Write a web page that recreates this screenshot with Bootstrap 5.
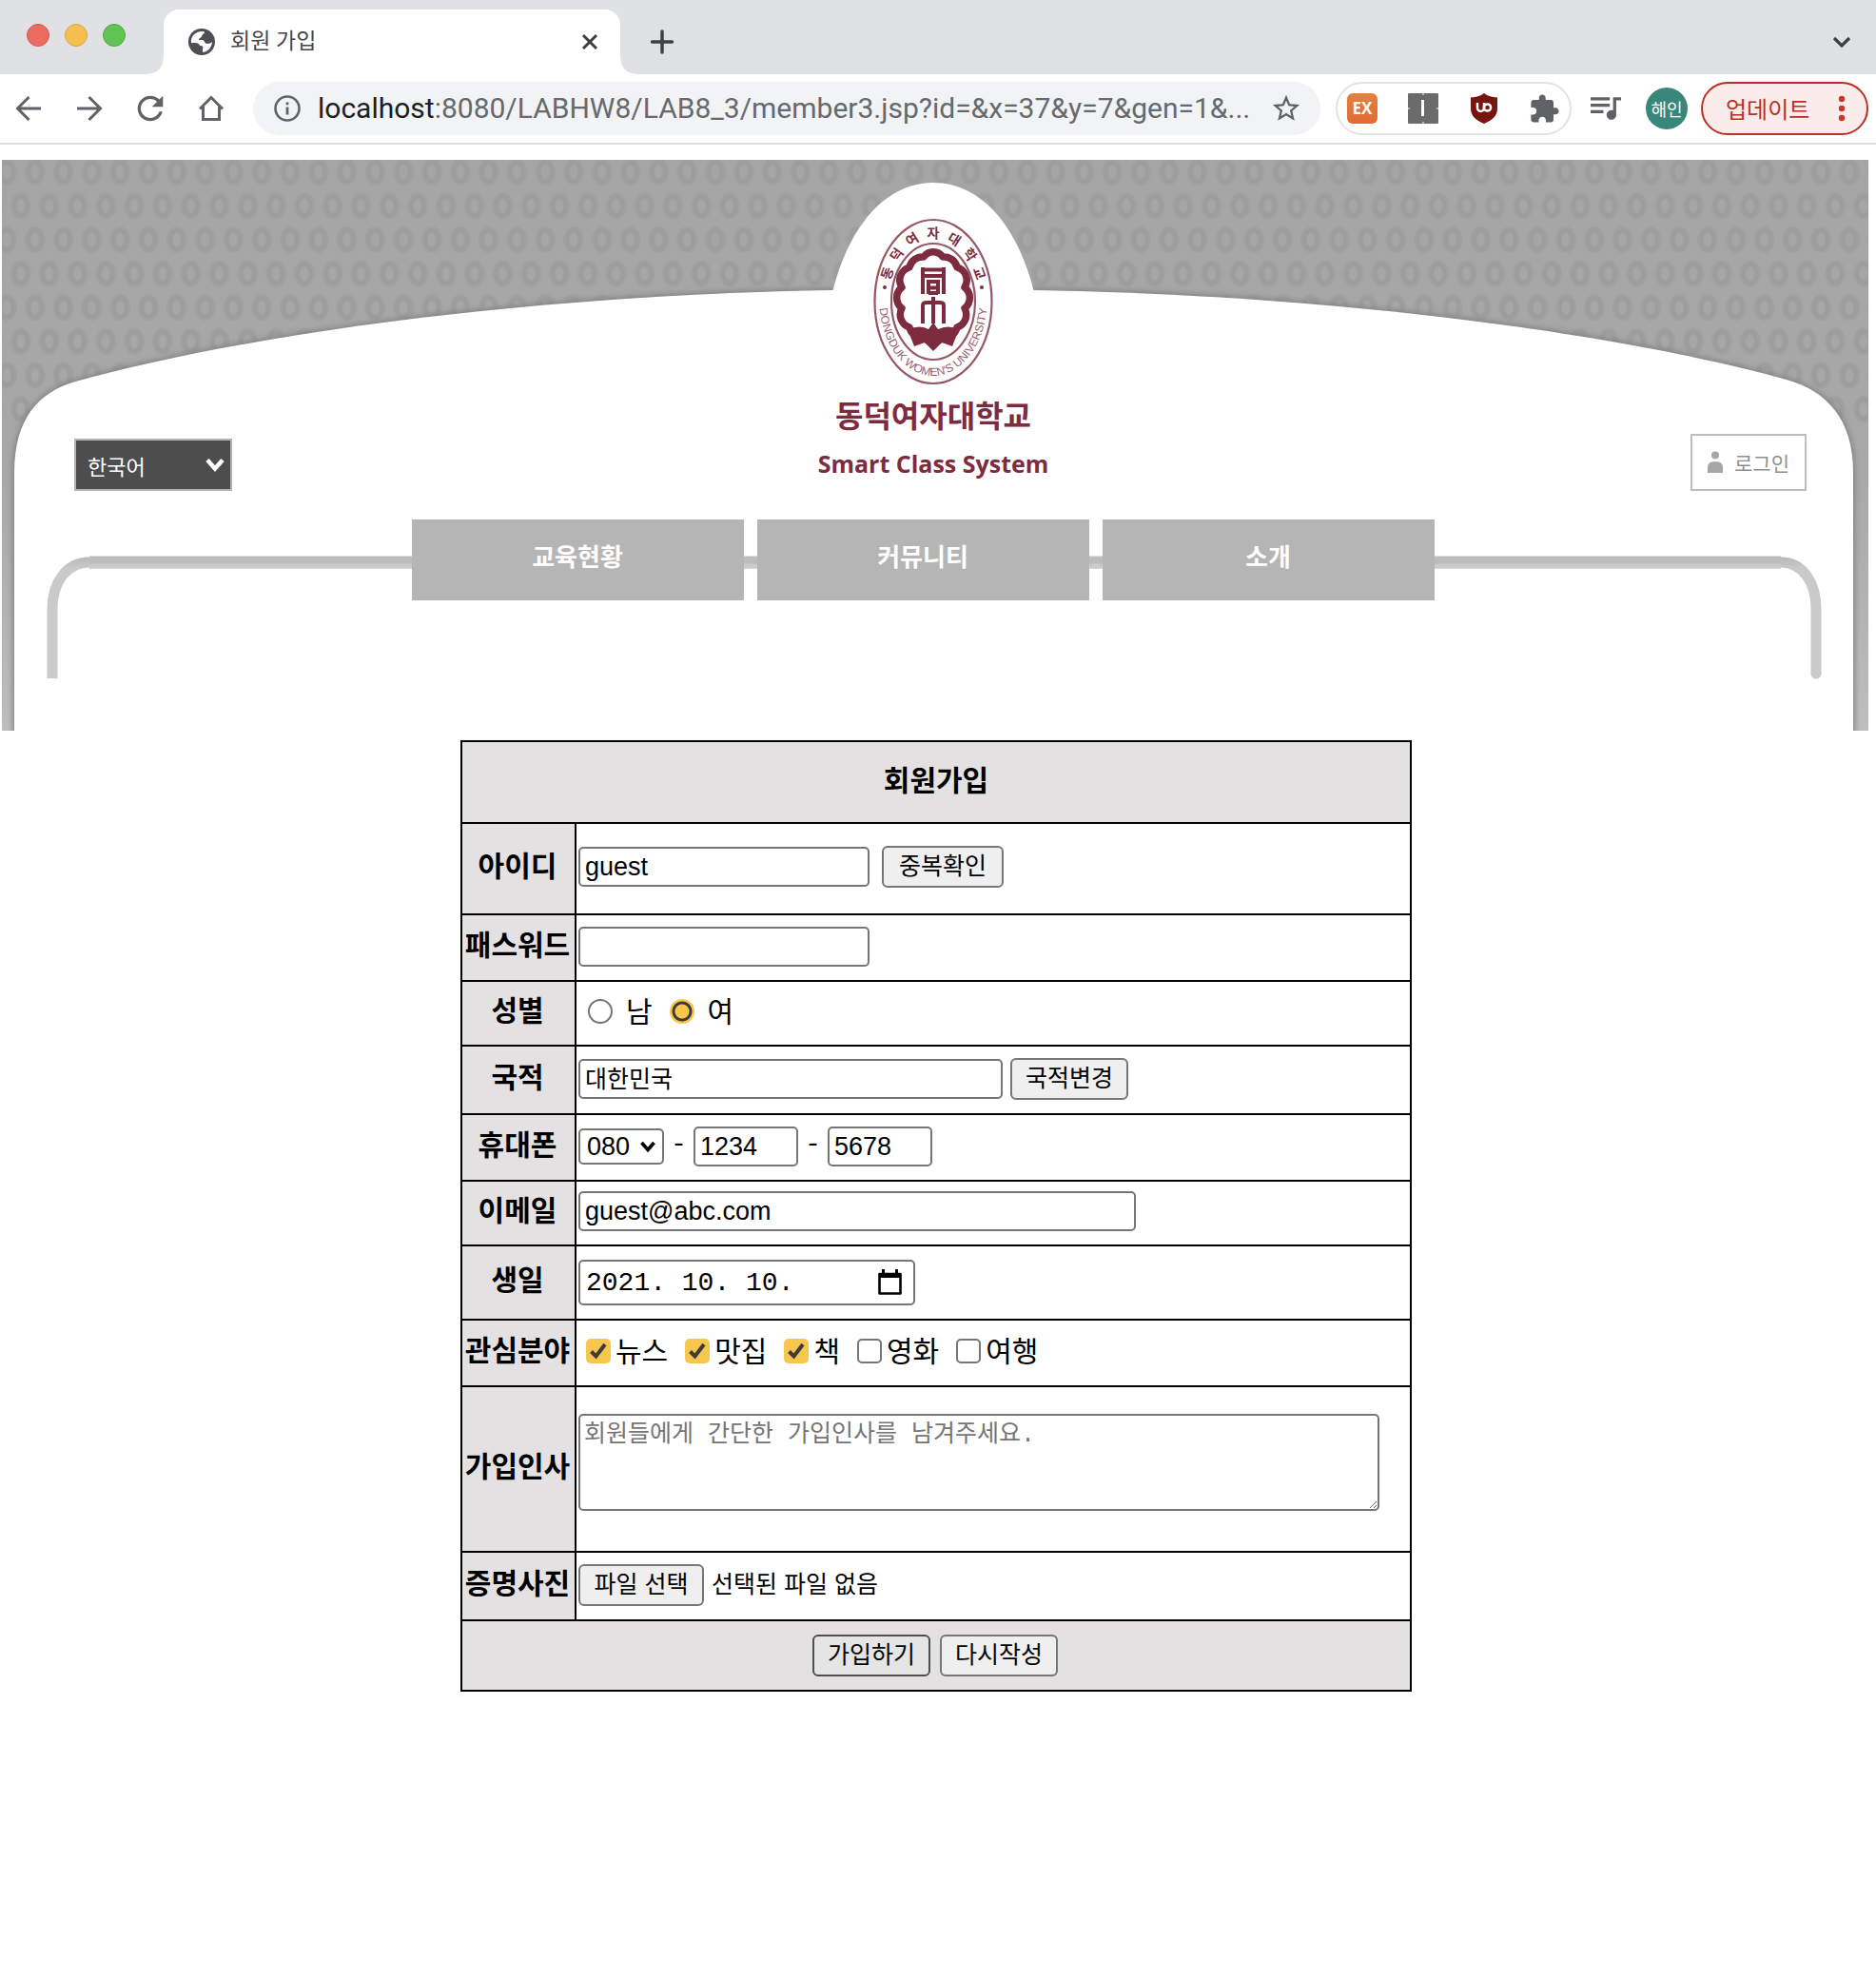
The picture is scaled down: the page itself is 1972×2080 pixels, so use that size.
<!DOCTYPE html>
<html lang="ko">
<head>
<meta charset="utf-8">
<meta name="viewport" content="width=device-width, initial-scale=1">
<title>회원 가입</title>
<link href="https://cdn.jsdelivr.net/npm/bootstrap@5.3.0/dist/css/bootstrap.min.css" rel="stylesheet">
<style>
  body { font-family: "Liberation Sans", "Noto Sans CJK KR", sans-serif; color: #000; background: #fff; }
  svg { display: block; flex: none; }

  /* browser frame */
  .tabstrip { height: 78px; background: #dfe1e5; padding: 10px 24px 0 28px; }
  .light { width: 24px; height: 24px; border-radius: 50%; border: 1px solid; }
  .light-red { background: #ed6a5e; border-color: #d9564c; }
  .light-amber { background: #f5bf4f; border-color: #dba63e; }
  .light-green { background: #61c454; border-color: #4fa93f; }
  .lights { gap: 16px; margin: 15px 40px 0 0; }
  .tab-active { position: relative; width: 480px; height: 68px; background: #fff; border-radius: 16px 16px 0 0; padding: 0 22px 0 26px; font: 23px/34px Roboto, "Noto Sans CJK KR", sans-serif; color: #45474c; }
  .tab-active::before, .tab-active::after { content: ""; position: absolute; bottom: 0; width: 16px; height: 16px; }
  .tab-active::before { right: 100%; background: radial-gradient(circle at 0 0, transparent 15px, #fff 16px); }
  .tab-active::after { left: 100%; background: radial-gradient(circle at 100% 0, transparent 15px, #fff 16px); }
  .bare { border: 0; background: none; padding: 0; color: inherit; }
  .toolbar { height: 74px; padding: 0 8px 0 14px; border-bottom: 2px solid #dcdcdc; color: #5f6368; }
  .tools { gap: 32px; margin-right: 28px; }
  .omnibox { height: 56px; border-radius: 28px; background: #f1f3f4; padding: 0 19px 0 22px; margin-right: 16px; min-width: 0; }
  .url { font: 30px/40px Roboto, "Noto Sans CJK KR", sans-serif; color: #66696d; margin: 0 12px 0 18px; min-width: 0; }
  .url b { font-weight: 400; color: #1d1e20; }
  .exts { height: 56px; border: 2px solid #e2e3e4; border-radius: 28px; padding: 0 10px; gap: 32px; margin-right: 20px; }
  .ext-ex { width: 32px; height: 32px; border-radius: 6px; background: linear-gradient(#e5813f, #e16a33); color: #fff; font: bold 17px/32px "Open Sans", sans-serif; }
  .avatar { width: 44px; height: 44px; border-radius: 50%; background: #39877a; color: #fff; font: 18px/24px "Noto Sans CJK KR", sans-serif; margin: 0 14px 0 26px; }
  .update { height: 56px; width: 176px; border: 2px solid #bb3024; border-radius: 28px; background: #faeceb; color: #bb3024; font: 24px/34px "Noto Sans CJK KR", sans-serif; padding: 0 22px 0 24px; }

  /* page */
  .sheet { padding: 16px 8px 0 2px; }
  .banner { position: relative; min-height: 600px; }
  .banner-art { position: absolute; inset: 0; width: 100%; height: 100%; z-index: -1; }
  .masthead { display: grid; grid-template-columns: 1fr auto 1fr; height: 378px; padding: 61px 65px 30px 76px; }
  .crest { color: #7d2c3f; margin-right: 15px; }
  .crest svg { overflow: visible; }
  .crest-ko { font: bold 32px/44px "Noto Sans CJK KR", sans-serif; margin-top: 8px; }
  .crest-en { font: bold 25px/44px "Open Sans", sans-serif; margin-top: 8px; white-space: nowrap; }
  .lang { position: relative; width: 166px; }
  .lang select { appearance: none; width: 100%; height: 55px; border: 2px solid #b4b4b4; border-radius: 0; background: #4d4d4d; color: #fff; font: 22px/32px "Noto Sans CJK KR", sans-serif; padding: 0 12px; }
  .lang svg { position: absolute; right: 8px; top: 18px; pointer-events: none; }
  .login { width: 122px; height: 60px; border: 2px solid #bdbdbd; color: #8f8f8f; font: 21px/32px "Noto Sans CJK KR", sans-serif; gap: 12px; }
  .sections { gap: 14px; padding-right: 26px; }
  .sections a { width: 349px; height: 85px; background: #b5b5b5; color: #fff; font: bold 26px/76px "Noto Sans CJK KR", sans-serif; text-align: center; text-decoration: none; }

  .signup { padding: 10px 0 0 2px; }
  .signup table { width: 1000px; border-collapse: collapse; }
  .signup th, .signup td { border: 2px solid #000; padding: 0 2px; vertical-align: middle; }
  .signup th, .signup .foot { background: #e3e1e2; }
  .signup th { font: bold 30px/40px "Noto Sans CJK KR", sans-serif; text-align: center; white-space: nowrap; padding: 0 2px 8px; }
  .signup th:not([colspan]) { width: 120px; padding: 0 3px 10px 1px; }
  .r68 { height: 68px; } .r70 { height: 70px; } .r72 { height: 72px; } .r74 { height: 74px; } .r78 { height: 78px; } .r86 { height: 86px; } .r96 { height: 96px; } .r174 { height: 174px; }
  .line { display: flex; align-items: center; }
  .signup td.raised { padding-bottom: 4px; }
  .signup td.nudged { padding-bottom: 2px; }
  .signup td.greet { padding-bottom: 14px; }
  .box { height: 42px; border: 2px solid #767676; border-radius: 5px; background: #fff; color: #000; font: 27px/36px "Liberation Sans", sans-serif; padding: 1px 5px 0; min-width: 0; }
  .box-ko { font: 25px/34px "Noto Sans CJK KR", sans-serif; padding: 0 5px 5px; }
  .w110 { width: 110px; } .w306 { width: 306px; } .w446 { width: 446px; } .w586 { width: 586px; }
  .push { height: 44px; border: 2px solid #767676; border-radius: 6px; background: #efefef; color: #000; font: 25px/34px "Noto Sans CJK KR", sans-serif; padding: 0 0 6px; width: 124px; text-align: center; }
  .push-check { width: 128px; margin-left: 13px; }
  .push-file { width: 132px; }
  .push-hot { background: #e5e5e5; border-color: #4f4f4f; }
  .prefix { position: relative; }
  .prefix select { appearance: none; width: 90px; height: 38px; padding: 0 7px; font-size: 27px; line-height: 34px; }
  .prefix svg { position: absolute; right: 9px; top: 12px; pointer-events: none; }
  .dash { width: 31px; text-align: center; font: 30px/34px "Noto Sans CJK KR", sans-serif; padding-bottom: 8px; }
  .date { width: 354px; height: 48px; border: 2px solid #767676; border-radius: 5px; padding: 0 10px 0 6px; }
  .date input { border: 0; padding: 2px 0 0; min-width: 0; outline: 0; font: 28px/40px "Liberation Mono", monospace; color: #000; background: none; }
  .pick { font: 30px/40px "Noto Sans CJK KR", sans-serif; }
  .pick label { padding-bottom: 4px; }
  .tick { appearance: none; flex: none; width: 26px; height: 26px; margin: 0; border: 2px solid #767676; background: #fff; }
  .tick[type=checkbox] { border-radius: 5px; }
  .tick[type=radio] { border-radius: 50%; }
  .tick[type=checkbox]:checked { border: 0; background: #f7c64c url("data:image/svg+xml,%3Csvg xmlns='http://www.w3.org/2000/svg' viewBox='0 0 26 26'%3E%3Cpath d='M5.500 13.500l5 5L20 6' fill='none' stroke='%233c3c3c' stroke-width='4'/%3E%3C/svg%3E"); }
  .tick[type=radio]:checked { border: 2px solid #f7c64c; background: radial-gradient(circle, #f7c64c 7px, #3c3c3c 8px, #3c3c3c 10px, #f7c64c 11px); }
  .checks { gap: 18px; padding-left: 8px; }
  .checks .tick { margin-right: 5px; }
  .radios { padding-left: 10px; }
  .radios .tick { margin-right: 14px; }
  .radios label { margin-right: 18px; }
  .hello { display: block; width: 842px; height: 102px; border: 2px solid #767676; border-radius: 5px; padding: 4px 4px 0; font: 25px/34px "Liberation Mono", "Noto Sans CJK KR", monospace; }
  .hello::placeholder { color: #757575; }
  .filename { font: 25px/34px "Noto Sans CJK KR", sans-serif; padding: 0 0 6px 8px; }
  .final { gap: 10px; padding-right: 2px; }
</style>
<script src="https://cdn.jsdelivr.net/npm/bootstrap@5.3.0/dist/js/bootstrap.bundle.min.js"></script>
</head>
<body>

<header>
  <div class="tabstrip d-flex">
    <div class="lights d-flex">
      <span class="light light-red"></span><span class="light light-amber"></span><span class="light light-green"></span>
    </div>
    <div class="tab-active d-flex align-items-center">
      <svg width="28" height="28" viewBox="0 0 28 28"><circle cx="14" cy="14" r="14" fill="#4d4e56"/><path d="M3 15C2 8 8 2.500 15 3c2 0 3 1 1 2.500-1 1-2 1-2 3 0 1-3 1-3 3.500h4c2 0 2 4 5 4 2 0 4-1 5-2-.5 6-4 10-9.500 11 -1-1-.5-4 0-5.500-1-2-3-.5-4-2.500-.5-2-3-1.500-7.500-2z" fill="#fff"/></svg>
      <span class="ms-3 me-auto">회원 가입</span>
      <button class="bare" aria-label="탭 닫기"><svg width="20" height="20" viewBox="0 0 20 20"><path d="M3 3l14 14M17 3L3 17" stroke="#3c4043" stroke-width="3"/></svg></button>
    </div>
    <div class="d-flex align-items-center flex-grow-1 ms-4 ps-2">
      <button class="bare" aria-label="새 탭 열기"><svg width="26" height="26" viewBox="0 0 26 26"><path d="M12 2v22M1.500 13h21" stroke="#3c4043" stroke-width="3.500" stroke-linecap="round"/></svg></button>
      <button class="bare ms-auto" aria-label="탭 검색"><svg width="24" height="24" viewBox="0 0 24 24"><path d="M4 8l8 8 8-8" fill="none" stroke="#3c4043" stroke-width="3.200"/></svg></button>
    </div>
  </div>

  <div class="toolbar d-flex align-items-center">
    <div class="tools d-flex">
      <button class="bare" aria-label="뒤로"><svg width="32" height="32" viewBox="0 0 32 32" fill="none" stroke="#5f6368" stroke-width="3"><path d="M29 16H5M16.500 4L4.500 16l12 12"/></svg></button>
      <button class="bare" aria-label="앞으로"><svg width="32" height="32" viewBox="0 0 32 32" fill="none" stroke="#5f6368" stroke-width="3"><path d="M3 16h24M15.500 4l12 12-12 12"/></svg></button>
      <button class="bare" aria-label="새로고침"><svg width="32" height="32" viewBox="2.400 2.400 19.200 19.200" fill="#5f6368"><path d="M17.650 6.350C16.200 4.900 14.210 4 12 4c-4.420 0-7.990 3.580-7.990 8s3.570 8 7.990 8c3.730 0 6.840-2.550 7.730-6h-2.080c-.82 2.330-3.040 4-5.650 4-3.310 0-6-2.690-6-6s2.690-6 6-6c1.660 0 3.140.69 4.220 1.780L13 11h7V4l-2.350 2.350z"/></svg></button>
      <button class="bare" aria-label="홈"><svg width="32" height="32" viewBox="0 0 32 32" fill="none" stroke="#5f6368" stroke-width="3"><path d="M4 16.500L16 4.500l12 12M7.500 14v13.500h17V14"/></svg></button>
    </div>
    <div class="omnibox d-flex align-items-center flex-grow-1">
      <svg width="28" height="28" viewBox="0 0 28 28" fill="none" stroke="#5f6368"><circle cx="14" cy="14" r="12.500" stroke-width="2.600"/><path d="M14 12.500v8M14 7.500v2.800" stroke-width="2.800"/></svg>
      <div class="url flex-grow-1 text-nowrap"><b>localhost</b>:8080/LABHW8/LAB8_3/member3.jsp?id=&amp;x=37&amp;y=7&amp;gen=1&amp;...</div>
      <button class="bare" aria-label="북마크"><svg width="34" height="34" viewBox="0 0 24 24" fill="#5f6368"><path d="M22 9.240l-7.190-.62L12 2 9.190 8.630 2 9.240l5.460 4.730L5.820 21 12 17.270 18.180 21l-1.630-7.030L22 9.240zM12 15.400l-3.760 2.270 1-4.280-3.320-2.880 4.380-.38L12 6.100l1.710 4.040 4.380.38-3.320 2.880 1 4.280L12 15.400z"/></svg></button>
    </div>
    <div class="exts d-flex align-items-center">
      <span class="ext-ex text-center">EX</span>
      <svg width="32" height="32" viewBox="0 0 32 32"><rect width="32" height="32" rx="1" fill="#6b6b6b"/><path d="M15.500 7v17" stroke="#fff" stroke-width="3"/><path d="M16 0v2M16 30v2M0 16h2M30 16h2" stroke="#ccc" stroke-width="1.500"/></svg>
      <svg width="32" height="32" viewBox="0 0 32 32"><path d="M16 0c4 3 8 4 14 4.500V16c0 8-5 12-14 16C7 28 2 24 2 16V4.500C8 4 12 3 16 0z" fill="#77150f"/><path d="M9 10v5.500a3.500 3.500 0 0 0 7 0V10" fill="none" stroke="#fff" stroke-width="2.500"/><circle cx="19.500" cy="15" r="3.600" fill="none" stroke="#fff" stroke-width="2.500"/></svg>
      <svg width="32" height="32" viewBox="1 0 23 23" fill="#5f6368"><path d="M20.500 11H19V7c0-1.100-.9-2-2-2h-4V3.500C13 2.120 11.880 1 10.500 1S8 2.120 8 3.500V5H4c-1.100 0-1.990.9-1.990 2v3.800H3.500c1.490 0 2.700 1.210 2.700 2.700s-1.210 2.700-2.700 2.700H2V20c0 1.100.9 2 2 2h3.800v-1.500c0-1.490 1.210-2.700 2.700-2.700 1.490 0 2.700 1.210 2.700 2.700V22H17c1.100 0 2-.9 2-2v-4h1.500c1.380 0 2.500-1.120 2.500-2.500S21.880 11 20.500 11z"/></svg>
    </div>
    <button class="bare" aria-label="미디어"><svg width="32" height="32" viewBox="3 3.500 19 19" fill="#5f6368"><path d="M15 6H3v2h12V6zm0 4H3v2h12v-2zM3 16h8v-2H3v2zM17 6v8.180c-.31-.11-.65-.18-1-.18-1.660 0-3 1.340-3 3s1.340 3 3 3 3-1.340 3-3V8h3V6h-5z"/></svg></button>
    <button class="bare avatar" aria-label="프로필 해인">해인</button>
    <button class="update d-flex align-items-center justify-content-between text-nowrap">업데이트 <svg width="8" height="28" viewBox="0 0 8 28" fill="#c5392c"><circle cx="4" cy="4" r="3.200"/><circle cx="4" cy="14" r="3.200"/><circle cx="4" cy="24" r="3.200"/></svg></button>
  </div>
</header>

<main class="sheet">
  <section class="banner">
    <svg class="banner-art" viewBox="0 0 1962 600" preserveAspectRatio="none" aria-hidden="true">
      <defs>
        <linearGradient id="wall" x1="0" y1="0" x2="0" y2="1"><stop offset="0" stop-color="#a5a5a5"/><stop offset=".55" stop-color="#a8a8a8"/><stop offset="1" stop-color="#bebebe"/></linearGradient>
        <linearGradient id="pipe" x1="0" y1="416" x2="0" y2="430" gradientUnits="userSpaceOnUse"><stop offset="0" stop-color="#b6b6b6"/><stop offset="1" stop-color="#cacaca"/></linearGradient>
        <pattern id="rings" width="29.800" height="71.200" patternUnits="userSpaceOnUse" x="5" y="-5">
          <g fill="none" stroke="#a0a0a0" stroke-width="7"><ellipse cx="0" cy="17.800" rx="7.500" ry="10.500"/><ellipse cx="29.800" cy="17.800" rx="7.500" ry="10.500"/><ellipse cx="14.900" cy="53.400" rx="7.500" ry="10.500"/></g>
          <g fill="none" stroke="#9d9d9d" stroke-width="3"><ellipse cx="0" cy="17.800" rx="7" ry="10"/><ellipse cx="29.800" cy="17.800" rx="7" ry="10"/><ellipse cx="14.900" cy="53.400" rx="7" ry="10"/></g>
        </pattern>
        <filter id="soft" x="-5%" y="-5%" width="110%" height="110%"><feGaussianBlur stdDeviation="3"/></filter>
        <path id="hill" d="M13 620V329C13 270 40 245 74 234C260 182 560 142 873 137H1085C1398 142 1700 182 1876 231C1918 243 1946 272 1946 329V620Z"/>
        <clipPath id="frame"><rect width="1962" height="600"/></clipPath>
      </defs>
      <g clip-path="url(#frame)">
        <rect width="1962" height="600" fill="url(#wall)"/>
        <rect width="1962" height="276" fill="url(#rings)"/>
        <use href="#hill" fill="#808080" stroke="#808080" stroke-width="3" filter="url(#soft)"/>
        <use href="#hill" fill="#fff"/>
        <path d="M873 139C893 60 935 24 979 24S1065 60 1085 139z" fill="#fff"/>
        <path d="M53 545V472C53 444 68 423 92 423H1870C1893 423 1907 444 1907 472V540" fill="none" stroke="url(#pipe)" stroke-width="11"/>
        <path d="M92 423H1870" stroke="#bdbdbd" stroke-width="13"/>
        <path d="M92 427H1870" stroke="#cacaca" stroke-width="5"/>
        <circle cx="1907" cy="540" r="5.500" fill="#cacaca"/>
      </g>
    </svg>

    <div class="masthead">
      <div class="lang align-self-end">
        <select aria-label="언어"><option>한국어</option></select>
        <svg width="20" height="20" viewBox="0 0 20 20"><path d="M2 4.500l8 9 8-9" fill="none" stroke="#fff" stroke-width="4.500"/></svg>
      </div>
      <div class="crest d-flex flex-column align-items-center">
        <svg width="126" height="176" viewBox="0 0 126 176" fill="none" stroke="#7d2c3f">
          <defs><path id="arcTop" d="M14 92A49 71 0 0 1 112 92"/><path id="arcLow" d="M6 84A57 82 0 0 0 120 84"/></defs>
          <ellipse cx="63" cy="88" rx="61.500" ry="86" stroke-width="2.200" stroke-opacity=".8"/>
          <ellipse cx="63" cy="88" rx="44" ry="61" stroke-width="2.200" stroke-opacity=".8"/>
          <g fill="#7d2c3f" stroke="none">
            <text font-family="Noto Sans CJK KR" font-weight="700" font-size="14" text-anchor="middle"><textPath href="#arcTop" startOffset="50%">동 &#160;덕 &#160;여 &#160;자 &#160;대 &#160;학 &#160;교</textPath></text>
            <text font-family="Liberation Sans" font-size="12" text-anchor="middle" fill-opacity=".8"><textPath href="#arcLow" startOffset="50%">DONGDUK WOMEN'S UNIVERSITY</textPath></text>
            <circle cx="12" cy="73" r="2"/><circle cx="114" cy="73" r="2"/>
            <path d="M36 117Q50 112 58 117L63 110L68 117Q78 112 90 117L83 135L72 131L63 140L54 131L43 135Z"/>
          </g>
          <path stroke-width="7.500" stroke-linejoin="round" d="M96 95A14 14 0 0 1 88 115A14 14 0 0 1 73 126A14 14 0 0 1 53 126A14 14 0 0 1 38 115A14 14 0 0 1 30 95A14 14 0 0 1 30 73A14 14 0 0 1 38 52A14 14 0 0 1 53 41A12 12 0 0 1 73 41A14 14 0 0 1 88 52A14 14 0 0 1 96 73A14 14 0 0 1 96 95Z"/>
          <path stroke-width="4" d="M52 52v28M74 52v28M52 54.500h22M52 61h22M58 80V67h10v13M58 73.500h10M58 79h10"/>
          <path stroke-width="4" d="M63 83v28M52 111V92q0-3 4-3h14q4 0 4 3v19"/>
        </svg>
        <div class="crest-ko">동덕여자대학교</div>
        <div class="crest-en">Smart Class System</div>
      </div>
      <a href="#" class="login d-flex align-items-center justify-content-center align-self-end text-decoration-none ms-auto">
        <svg width="16" height="24" viewBox="0 0 16 24" fill="#a6a6a6"><circle cx="8" cy="4.500" r="4"/><path d="M0 23v-6q0-6 8-6t8 6v6z"/></svg>로그인</a>
    </div>
    <nav class="sections d-flex justify-content-center">
      <a href="#">교육현황</a><a href="#">커뮤니티</a><a href="#">소개</a>
    </nav>
  </section>

  <form class="signup">
    <table class="mx-auto">
      <tr class="r86"><th colspan="2">회원가입</th></tr>
      <tr class="r96"><th><label for="uid">아이디</label></th><td class="raised"><div class="line"><input id="uid" class="box w306" value="guest"><button type="button" class="push push-check">중복확인</button></div></td></tr>
      <tr class="r70"><th><label for="pw">패스워드</label></th><td class="nudged"><div class="line"><input id="pw" type="password" class="box w306"></div></td></tr>
      <tr class="r68"><th>성별</th><td class="raised"><div class="line pick radios"><input class="tick" type="radio" name="gen" id="g0"><label for="g0">남</label><input class="tick" type="radio" name="gen" id="g1" checked><label for="g1">여</label></div></td></tr>
      <tr class="r72"><th><label for="nat">국적</label></th><td class="nudged"><div class="line"><input id="nat" class="box box-ko w446" value="대한민국"><button type="button" class="push ms-2">국적변경</button></div></td></tr>
      <tr class="r70"><th><label for="ph1">휴대폰</label></th><td class="nudged"><div class="line"><span class="prefix"><select id="ph1" class="box"><option>080</option></select><svg width="16" height="14" viewBox="0 0 16 14"><path d="M1.500 3L8 10.500 14.500 3" fill="none" stroke="#000" stroke-width="3.600"/></svg></span><span class="dash">-</span><input class="box w110" value="1234" aria-label="휴대폰 가운데 자리"><span class="dash">-</span><input class="box w110" value="5678" aria-label="휴대폰 끝자리"></div></td></tr>
      <tr class="r68"><th><label for="mail">이메일</label></th><td class="raised"><div class="line"><input id="mail" class="box w586" value="guest@abc.com"></div></td></tr>
      <tr class="r78"><th><label for="birth">생일</label></th><td><div class="date line"><input id="birth" class="flex-grow-1" value="2021. 10. 10."><button type="button" class="bare" aria-label="날짜 선택"><svg width="28" height="28" viewBox="0 0 28 28"><path d="M2.500 5h22v20.500h-22z" fill="none" stroke="#000" stroke-width="2.600" stroke-linejoin="round"/><path d="M2 4h23v5H2zM5 0h3v5H5zM19 0h3v5h-3z"/></svg></button></div></td></tr>
      <tr class="r70"><th>관심분야</th><td class="raised"><div class="line pick checks"><span class="line"><input class="tick" type="checkbox" id="c1" checked><label for="c1">뉴스</label></span><span class="line"><input class="tick" type="checkbox" id="c2" checked><label for="c2">맛집</label></span><span class="line"><input class="tick" type="checkbox" id="c3" checked><label for="c3">책</label></span><span class="line"><input class="tick" type="checkbox" id="c4"><label for="c4">영화</label></span><span class="line"><input class="tick" type="checkbox" id="c5"><label for="c5">여행</label></span></div></td></tr>
      <tr class="r174"><th><label for="hello">가입인사</label></th><td class="greet"><textarea id="hello" class="hello" placeholder="회원들에게 간단한 가입인사를 남겨주세요."></textarea></td></tr>
      <tr class="r72"><th><label for="photo">증명사진</label></th><td class="nudged"><div class="line"><input type="file" id="photo" class="visually-hidden"><label for="photo" class="push push-file">파일 선택</label><span class="filename">선택된 파일 없음</span></div></td></tr>
      <tr class="r74"><td colspan="2" class="foot"><div class="line final justify-content-center"><button type="button" class="push push-hot">가입하기</button><button type="reset" class="push">다시작성</button></div></td></tr>
    </table>
  </form>
</main>
</body>
</html>
